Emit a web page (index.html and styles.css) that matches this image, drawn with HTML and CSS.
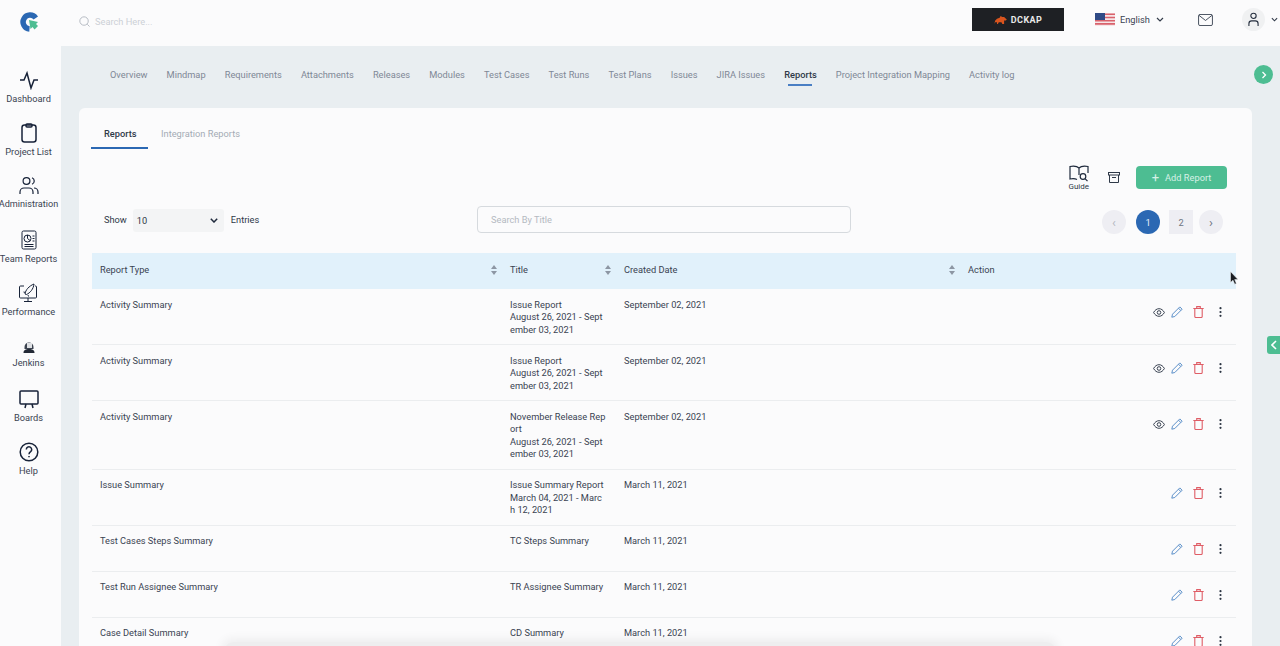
FILE: index.html
```html
<!DOCTYPE html>
<html>
  <head>
    <meta charset="utf-8">
    <title>Reports</title>
    <link rel="stylesheet" href="styles.css">
  </head>
  <body>
    <svg class="sprite">
      <symbol id="i-eye" viewBox="0 0 12 9"><path d="M.6 4.500C2 2 3.800.7 6 .7s4 1.300 5.400 3.800C10 7 8.200 8.300 6 8.300S2 7 .6 4.500z" fill="none" stroke="#3a4352"/><circle cx="6" cy="4.500" r="1.800" fill="none" stroke="#3a4352"/></symbol>
      <symbol id="i-edit" viewBox="0 0 12 12"><path d="M.8 11.200l.7-3L8.800.9l2.300 2.300-7.300 7.300zM7.500 2.200l2.300 2.300" fill="none" stroke="#5b8fc9"/></symbol>
      <symbol id="i-trash" viewBox="0 0 11 12"><path d="M.3 2.500h10.400M1.800 2.500v8a1 1 0 0 0 1 1h5.400a1 1 0 0 0 1-1v-8M3.700 2.500V.6h3.600v1.900" fill="none" stroke="#df5d66" stroke-width="1.100"/></symbol>
      <symbol id="i-dots" viewBox="0 0 3 10"><g fill="#2b3442"><circle cx="1.500" cy="1.200" r="1.100"/><circle cx="1.500" cy="5" r="1.100"/><circle cx="1.500" cy="8.800" r="1.100"/></g></symbol>
    </svg>

    <div class="app">
      <header class="topbar">
        <div class="logo-cell">
          <svg width="20" height="20" viewBox="0 0 20 20">
            <path d="M16.800 6A7 7 0 1 0 10.500 17" fill="none" stroke="#2b68b3" stroke-width="5.400"/>
            <path d="M10 8l9 2-2 2 2 2-3.500 3.500-2-2.500-2 2z" fill="#4dbd92"/>
          </svg>
        </div>
        <div class="search">
          <svg width="11" height="11" viewBox="0 0 12 12" fill="none" stroke="#a9afb8" stroke-width="0.9">
            <circle cx="5.500" cy="5.500" r="4.600"/><path d="M9 9l2.500 2.500"/>
          </svg>
          <span>Search Here...</span>
        </div>
        <div class="brand">
          <svg width="14" height="8" viewBox="0 0 15 9"><path d="M0 9l1-4 2-2 3-1 1-2 2 1 2 0 3 3-1 1-2 0v4h-2l-1-2-3 0-1 2H3l0-2-2 0z" fill="#d9541e"/></svg>
          <span>DCKAP</span>
        </div>
        <div class="lang">
          <svg width="20" height="13" viewBox="0 0 20 13">
            <rect width="20" height="13" fill="#f6e6e8"/>
            <path d="M0 .5h20v1.600H0zM0 3.700h20v1.600H0zM0 6.900h20v1.600H0zM0 10.100h20v1.600H0z" fill="#d9626c"/>
            <rect width="10" height="7" fill="#2f4a86"/>
          </svg>
          <span>English</span>
          <svg width="8" height="5" viewBox="0 0 8 5" fill="none" stroke="#333c4a" stroke-width="1.200"><path d="M1 1l3 3 3-3"/></svg>
        </div>
        <svg class="mail" width="15" height="12" viewBox="0 0 16 13" fill="none" stroke="#3a4352" stroke-width="1">
          <rect x=".5" y=".5" width="15" height="12" rx="1.500"/><path d="M1 1.500l7 5.500 7-5.500"/>
        </svg>
        <div class="user">
          <div class="avatar">
            <svg width="11" height="15" viewBox="0 0 12 15" fill="none" stroke="#262f3f" stroke-width="1.200">
              <circle cx="6" cy="3.500" r="2.900"/><path d="M1 14.500v-2.500a3 3 0 0 1 3-3h4a3 3 0 0 1 3 3v2.500"/>
            </svg>
          </div>
          <svg width="7" height="5" viewBox="0 0 8 5" fill="none" stroke="#333c4a" stroke-width="1.300"><path d="M1 1l3 3 3-3"/></svg>
        </div>
      </header>

      <div class="body-row">
        <nav class="sidebar">
          <a class="side-item">
            <svg width="20" height="20" viewBox="0 0 20 20" fill="none" stroke="#172238" stroke-width="1.500"><path d="M1 10h4l3-7 4 15 3-8h4"/></svg>
            <span>Dashboard</span>
          </a>
          <a class="side-item">
            <svg width="20" height="20" viewBox="0 0 20 20" fill="none" stroke="#172238" stroke-width="1.500"><rect x="3" y="2" width="14" height="17" rx="2.500"/><rect x="7" y="1" width="6" height="3" rx="1"/></svg>
            <span>Project List</span>
          </a>
          <a class="side-item admin">
            <svg width="20" height="20" viewBox="0 0 20 20" fill="none" stroke="#172238" stroke-width="1.200"><circle cx="7.500" cy="5" r="3.400"/><path d="M1 18v-2a4 4 0 0 1 4-4h5a4 4 0 0 1 4 4v2M13 1.800a3.400 3.400 0 0 1 0 6.400M15 12a4 4 0 0 1 4 4v2"/></svg>
            <span>Administration</span>
          </a>
          <a class="side-item">
            <svg width="20" height="20" viewBox="0 0 20 20" fill="none" stroke="#172238" stroke-width="1"><rect x="3" y="1" width="14" height="18" rx="1.500"/><circle cx="8.500" cy="8.500" r="3.500"/><path d="M8.500 5v3.500l2.500 2M13.500 6h2M13.500 8.500h2M13.500 11h2M5.500 14.500h9M5.500 16.500h9"/></svg>
            <span>Team Reports</span>
          </a>
          <a class="side-item">
            <svg width="20" height="20" viewBox="0 0 20 20" fill="none" stroke="#172238" stroke-width="1"><path d="M6 3H2.500A1 1 0 0 0 1.500 4v10a1 1 0 0 0 1 1h15a1 1 0 0 0 1-1V4a1 1 0 0 0-1-1H17M10 15v3M6 18.500h8"/><path d="M7 11c.5-4 4-8 9-10-.5 5-4 9-7.500 10.500zM7.500 9.500L5.500 9M10 12l.5 1.500"/></svg>
            <span>Performance</span>
          </a>
          <a class="side-item jenkins">
            <svg width="16" height="16" viewBox="0 0 16 16"><path d="M3.500 9a4.500 4.500 0 1 1 9 0v2h-9z" fill="#3c4350"/><rect x="6" y="5" width="5" height="5" fill="#dfe1e4"/><path d="M2.500 15c0-3 2-4 5.500-4s5.500 1 5.500 4z" fill="#232a36"/></svg>
            <span>Jenkins</span>
          </a>
          <a class="side-item">
            <svg width="20" height="20" viewBox="0 0 20 20" fill="none" stroke="#172238" stroke-width="1.500"><rect x="1" y="2" width="18" height="13" rx="1"/><path d="M7 15l-1 4M13 15l1 4"/></svg>
            <span>Boards</span>
          </a>
          <a class="side-item">
            <svg width="20" height="20" viewBox="0 0 20 20" fill="none" stroke="#172238" stroke-width="1.500"><circle cx="10" cy="10" r="8.800"/><path d="M7.300 7.500a2.700 2.700 0 1 1 4.300 2.200c-1 .7-1.600 1.200-1.600 2.500"/><path d="M10 14v1.200"/></svg>
            <span>Help</span>
          </a>
        </nav>

        <main class="content">
          <div class="tabs-row">
            <a class="tab">Overview</a>
            <a class="tab">Mindmap</a>
            <a class="tab">Requirements</a>
            <a class="tab">Attachments</a>
            <a class="tab">Releases</a>
            <a class="tab">Modules</a>
            <a class="tab">Test Cases</a>
            <a class="tab">Test Runs</a>
            <a class="tab">Test Plans</a>
            <a class="tab">Issues</a>
            <a class="tab">JIRA Issues</a>
            <a class="tab active">Reports</a>
            <a class="tab">Project Integration Mapping</a>
            <a class="tab">Activity log</a>
          </div>

          <section class="card">
            <div class="subtabs">
              <a class="subtab active">Reports</a>
              <a class="subtab">Integration Reports</a>
            </div>

            <div class="actions">
              <div class="guide">
                <svg width="20" height="17" viewBox="0 0 20 17" fill="none" stroke="#1f2a3c" stroke-width="1.200"><path d="M10 3C8.500 1.500 4 1 1 1.500V14c2.500-.5 5-.5 7 .5M10 3c1.500-1.500 6-2 9-1.500V8M10 3v7"/><circle cx="14" cy="11.500" r="2.800"/><path d="M16 13.700l2.500 2.500"/></svg>
                <span>Guide</span>
              </div>
              <svg class="archive" width="12" height="11" viewBox="0 0 12 11" fill="none" stroke="#2f3948" stroke-width="1"><rect x=".5" y=".5" width="11" height="2.500"/><path d="M1.500 3v7.500h9V3M4 5.500h4"/></svg>
              <button class="add-btn"><span class="plus">+</span>Add Report</button>
            </div>

            <div class="filters">
              <div class="entries">
                <span>Show</span>
                <div class="select">
                  <span>10</span>
                  <svg width="8" height="5" viewBox="0 0 8 5" fill="none" stroke="#1f2a3c" stroke-width="1.500"><path d="M.8 .8L4 4l3.200-3.200"/></svg>
                </div>
                <span>Entries</span>
              </div>
              <div class="title-search">Search By Title</div>
              <div class="pager">
                <span class="page round arrow muted">&#8249;</span>
                <span class="page round current">1</span>
                <span class="page">2</span>
                <span class="page round arrow next">&#8250;</span>
              </div>
            </div>

            <div class="table">
              <div class="row head">
                <div class="cell">Report Type<i class="sort"></i></div>
                <div class="cell">Title<i class="sort"></i></div>
                <div class="cell">Created Date<i class="sort"></i></div>
                <div class="cell">Action</div>
              </div>

              <div class="row">
                <div class="cell">Activity Summary</div>
                <div class="cell title-cell">Issue Report<br>August 26, 2021 - September 03, 2021</div>
                <div class="cell">September 02, 2021</div>
                <div class="cell icons">
                  <svg class="eye" width="12" height="9"><use href="#i-eye"/></svg>
                  <svg class="edit" width="12" height="12"><use href="#i-edit"/></svg>
                  <svg class="trash" width="11" height="12"><use href="#i-trash"/></svg>
                  <svg class="dots" width="3" height="10"><use href="#i-dots"/></svg>
                </div>
              </div>

              <div class="row">
                <div class="cell">Activity Summary</div>
                <div class="cell title-cell">Issue Report<br>August 26, 2021 - September 03, 2021</div>
                <div class="cell">September 02, 2021</div>
                <div class="cell icons">
                  <svg class="eye" width="12" height="9"><use href="#i-eye"/></svg>
                  <svg class="edit" width="12" height="12"><use href="#i-edit"/></svg>
                  <svg class="trash" width="11" height="12"><use href="#i-trash"/></svg>
                  <svg class="dots" width="3" height="10"><use href="#i-dots"/></svg>
                </div>
              </div>

              <div class="row">
                <div class="cell">Activity Summary</div>
                <div class="cell title-cell">November Release Report<br>August 26, 2021 - September 03, 2021</div>
                <div class="cell">September 02, 2021</div>
                <div class="cell icons">
                  <svg class="eye" width="12" height="9"><use href="#i-eye"/></svg>
                  <svg class="edit" width="12" height="12"><use href="#i-edit"/></svg>
                  <svg class="trash" width="11" height="12"><use href="#i-trash"/></svg>
                  <svg class="dots" width="3" height="10"><use href="#i-dots"/></svg>
                </div>
              </div>

              <div class="row">
                <div class="cell">Issue Summary</div>
                <div class="cell title-cell">Issue Summary Report<br>March 04, 2021 - March 12, 2021</div>
                <div class="cell">March 11, 2021</div>
                <div class="cell icons">
                  <svg class="edit" width="12" height="12"><use href="#i-edit"/></svg>
                  <svg class="trash" width="11" height="12"><use href="#i-trash"/></svg>
                  <svg class="dots" width="3" height="10"><use href="#i-dots"/></svg>
                </div>
              </div>

              <div class="row">
                <div class="cell">Test Cases Steps Summary</div>
                <div class="cell title-cell">TC Steps Summary</div>
                <div class="cell">March 11, 2021</div>
                <div class="cell icons">
                  <svg class="edit" width="12" height="12"><use href="#i-edit"/></svg>
                  <svg class="trash" width="11" height="12"><use href="#i-trash"/></svg>
                  <svg class="dots" width="3" height="10"><use href="#i-dots"/></svg>
                </div>
              </div>

              <div class="row">
                <div class="cell">Test Run Assignee Summary</div>
                <div class="cell title-cell">TR Assignee Summary</div>
                <div class="cell">March 11, 2021</div>
                <div class="cell icons">
                  <svg class="edit" width="12" height="12"><use href="#i-edit"/></svg>
                  <svg class="trash" width="11" height="12"><use href="#i-trash"/></svg>
                  <svg class="dots" width="3" height="10"><use href="#i-dots"/></svg>
                </div>
              </div>

              <div class="row">
                <div class="cell">Case Detail Summary</div>
                <div class="cell title-cell">CD Summary</div>
                <div class="cell">March 11, 2021</div>
                <div class="cell icons">
                  <svg class="edit" width="12" height="12"><use href="#i-edit"/></svg>
                  <svg class="trash" width="11" height="12"><use href="#i-trash"/></svg>
                  <svg class="dots" width="3" height="10"><use href="#i-dots"/></svg>
                </div>
              </div>
            </div>
          </section>
        </main>
      </div>

      <div class="fab-next">
        <svg width="6" height="8" viewBox="0 0 6 8" fill="none" stroke="#fff" stroke-width="1.300"><path d="M1.500 1l3 3-3 3"/></svg>
      </div>
      <div class="side-tag">
        <svg width="6" height="10" viewBox="0 0 6 10" fill="none" stroke="#fff" stroke-width="1.600"><path d="M5 1L1 5l4 4"/></svg>
      </div>
      <svg class="cursor" width="9" height="14" viewBox="0 0 9 14"><path d="M.5 .5v11l2.500-2.300 1.700 4 1.700-.7-1.700-3.900h3.300z" fill="#1a1d22" stroke="#fff" stroke-width=".5"/></svg>
      <div class="bottom-shadow"></div>
    </div>
  </body>
</html>
```

FILE: styles.css
```css
* {
  box-sizing: border-box;
}

html, body {
  margin: 0;
  height: 100%;
  overflow: hidden;
}

body {
  font-family: Roboto, "Liberation Sans", sans-serif;
  font-size: 9.250px;
  color: #2f3948;
  background: #fbfbfc;
}

.sprite {
  display: none;
}

.app {
  position: relative;
  width: 1280px;
  height: 646px;
  overflow: hidden;
}

.topbar {
  display: flex;
  align-items: center;
  height: 46px;
  padding-bottom: 7px;
  background: #fbfbfc;
}

.logo-cell {
  display: flex;
  justify-content: center;
  width: 57px;
  margin-top: 4px;
}

.search {
  display: flex;
  align-items: center;
  gap: 5px;
  margin-left: 22px;
  margin-top: 4px;
  width: 893px;
  color: #ccd0d6;
}

.brand {
  display: flex;
  align-items: center;
  justify-content: center;
  gap: 3px;
  width: 92px;
  height: 23px;
  background: #1e2024;
  color: #e9e9e9;
  font-size: 9px;
  font-weight: 700;
  letter-spacing: 0.4px;
}

.lang {
  display: flex;
  align-items: center;
  gap: 5px;
  margin-left: 31px;
  color: #3a4352;
}

.lang svg:last-child {
  margin-left: 1px;
}

.mail {
  margin-left: 34px;
}

.user {
  display: flex;
  align-items: center;
  gap: 6px;
  margin-left: 29px;
}

.avatar {
  display: flex;
  align-items: center;
  justify-content: center;
  width: 23px;
  height: 23px;
  border-radius: 50%;
  background: #f0f1f2;
}

.body-row {
  display: flex;
  height: 600px;
}

.sidebar {
  display: flex;
  flex-direction: column;
  align-items: center;
  flex: none;
  width: 61px;
  padding-top: 24px;
  padding-right: 4px;
}

.side-item {
  display: flex;
  flex-direction: column;
  align-items: center;
  gap: 3px;
  height: 53.200px;
  color: #3a4352;
  white-space: nowrap;
}

.admin {
  font-size: 9.100px;
}

.jenkins {
  padding-top: 2px;
  gap: 3px;
}

.content {
  flex: 1;
  padding: 0 28px 0 18px;
  background: #e9eef1;
}

.tabs-row {
  display: flex;
  gap: 19.100px;
  height: 62px;
  padding-left: 31px;
  padding-top: 23px;
  color: #7f8896;
}

.tab {
  height: 17px;
  white-space: nowrap;
}

.tab.active {
  color: #2f3948;
  font-weight: 500;
  background: linear-gradient(#4a7fc4, #4a7fc4) center bottom / 24px 2px no-repeat;
}

.card {
  height: 560px;
  padding: 0 16px 0 13px;
  background: #fbfbfc;
  border-radius: 6px;
}

.subtabs {
  display: flex;
  height: 41px;
  margin-left: -1px;
  padding-top: 20px;
}

.subtab {
  padding: 0 12px 0 13px;
  height: 21px;
  color: #a4abb5;
  white-space: nowrap;
}

.subtab.active {
  padding-right: 11.500px;
  color: #2f3948;
  font-weight: 500;
  border-bottom: 2px solid #2b68b3;
}

.actions {
  display: flex;
  align-items: center;
  justify-content: flex-end;
  height: 27px;
  margin-top: 15px;
  padding-right: 9px;
}

.guide {
  display: flex;
  flex-direction: column;
  align-items: center;
  font-size: 8px;
}

.archive {
  margin-left: 19px;
}

.add-btn {
  display: flex;
  align-items: center;
  justify-content: center;
  gap: 6px;
  width: 91px;
  height: 23px;
  margin-left: 16px;
  border: 0;
  border-radius: 4px;
  background: #4dbd92;
  color: #d6f1e6;
  font: inherit;
}

.plus {
  font-size: 13px;
  line-height: 1;
}

.filters {
  display: flex;
  align-items: center;
  height: 27px;
  margin-top: 15px;
  padding-left: 12px;
  margin-bottom: 20px;
}

.entries {
  display: flex;
  align-items: center;
  gap: 7px;
  width: 373px;
}

.select {
  display: flex;
  align-items: center;
  justify-content: space-between;
  width: 91px;
  height: 23px;
  margin-top: 1px;
  margin-left: -1px;
  padding: 0 6px 0 4px;
  background: #f3f4f5;
  border-radius: 3px;
}

.title-search {
  display: flex;
  align-items: center;
  width: 374px;
  height: 27px;
  padding-left: 13px;
  border: 1px solid #d6dade;
  border-radius: 4px;
  color: #b4b9c1;
}

.pager {
  display: flex;
  align-items: center;
  gap: 9px;
  margin-left: auto;
  margin-right: 13px;
  margin-top: 5px;
}

.page {
  display: flex;
  align-items: center;
  justify-content: center;
  width: 24px;
  height: 24px;
  background: #eeeef3;
  color: #6d7480;
}

.page.round {
  border-radius: 50%;
}

.page.arrow {
  font-size: 13px;
}

.page.muted {
  margin-right: 1px;
  color: #b4b8c2;
}

.page.next {
  margin-left: -3px;
}

.page.current {
  background: #2b68b3;
  color: #e8f0f8;
}

.row {
  display: grid;
  grid-template-columns: 410px 114px 344px 276px;
  border-bottom: 1px solid #ebedef;
}

.row.head {
  height: 36px;
  align-items: center;
  background: #e1f1fb;
  border-bottom: 0;
}

.cell {
  position: relative;
  padding: 9.500px 8px 8px;
  line-height: 12.500px;
  color: #3a4352;
}

.head .cell {
  padding-top: 0;
  padding-bottom: 1px;
}

.title-cell {
  padding-right: 10.500px;
  word-break: break-all;
}

.sort {
  position: absolute;
  top: 1px;
  right: 5px;
  width: 6px;
  height: 10px;
}

.sort::before, .sort::after {
  content: "";
  position: absolute;
  left: 0;
  border-left: 3px solid transparent;
  border-right: 3px solid transparent;
}

.sort::before {
  top: 0;
  border-bottom: 4px solid #8d96a3;
}

.sort::after {
  bottom: 0;
  border-top: 4px solid #8d96a3;
}

.icons {
  display: flex;
  align-items: center;
  justify-content: flex-end;
  height: 45px;
  padding: 1px 14.500px 0 0;
}

.edit {
  margin-left: 6px;
}

.trash {
  margin-left: 10px;
}

.dots {
  margin-left: 15px;
}

.fab-next {
  position: absolute;
  top: 65px;
  left: 1254px;
  display: flex;
  align-items: center;
  justify-content: center;
  width: 19px;
  height: 19px;
  border-radius: 50%;
  background: #4dbd92;
}

.side-tag {
  position: absolute;
  top: 336px;
  left: 1267px;
  display: flex;
  align-items: center;
  justify-content: center;
  width: 13px;
  height: 18px;
  border-radius: 3px 0 0 3px;
  background: #4dbd92;
}

.cursor {
  position: absolute;
  top: 271px;
  left: 1230px;
}

.bottom-shadow {
  position: absolute;
  left: 225px;
  top: 642px;
  width: 830px;
  height: 30px;
  border-radius: 8px;
  background: rgba(0, 0, 0, 0.05);
  box-shadow: 0 0 10px 4px rgba(0, 0, 0, 0.05);
}
```
